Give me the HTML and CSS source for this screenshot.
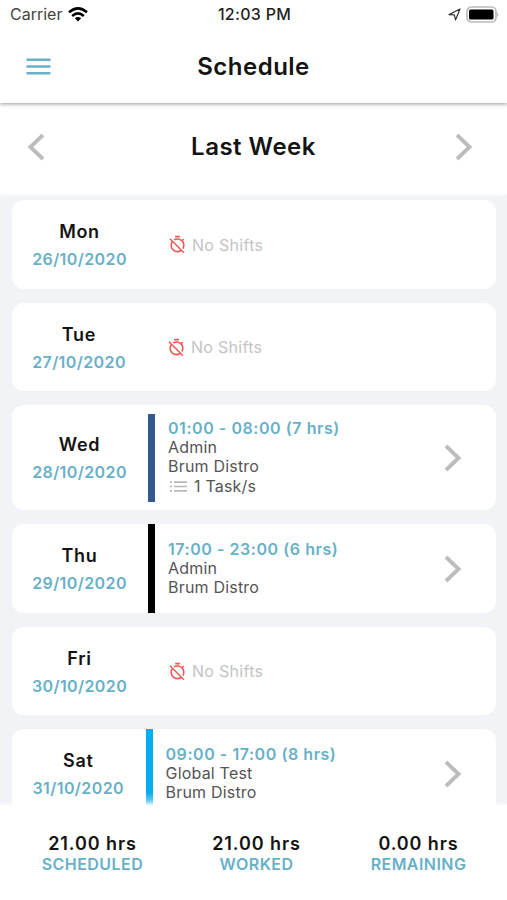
FILE: index.html
```html
<!DOCTYPE html>
<html lang="en">
<head>
<meta charset="utf-8">
<title>Schedule</title>
<link rel="stylesheet" href="styles.css">
</head>
<body>
<svg class="defs" aria-hidden="true">
  <symbol id="next" viewBox="0 0 18 28"><path d="M2 2 L14.6 14 L2 26" fill="none" stroke="currentColor" stroke-width="3.8"/></symbol>
  <symbol id="timer-off" viewBox="0 0 24 24"><path fill="currentColor" d="M19.04 4.55l-1.42 1.42C16.07 4.74 14.12 4 12 4c-1.83 0-3.53.55-4.95 1.48l1.46 1.46C9.53 6.35 10.73 6 12 6c3.87 0 7 3.13 7 7 0 1.27-.35 2.47-.94 3.49l1.45 1.45C20.45 16.53 21 14.83 21 13c0-2.12-.74-4.07-1.97-5.61l1.42-1.42-1.41-1.42zM15 1H9v2h6V1zM3.02 4L1.75 5.27 4.5 8.03C3.55 9.45 3 11.16 3 13c0 4.97 4.02 9 9 9 1.84 0 3.55-.55 4.98-1.5l2.5 2.5 1.27-1.27-7.71-7.71L3.02 4zM12 20c-3.87 0-7-3.13-7-7 0-1.28.35-2.48.95-3.52l9.56 9.56c-1.03.61-2.23.96-3.51.96z"/></symbol>
</svg>
<div class="app">
  <div class="status">
    <div class="carrier">
      <span>Carrier</span>
      <svg class="wifi" viewBox="0 0 20 15"><g fill="none" stroke="#000" stroke-width="2.6"><path d="M1 5.3 Q10 -2.5 19 5.3"/><path d="M4.2 8.9 Q10 3.9 15.8 8.9"/></g><path d="M6.8 11.2 Q10 8.8 13.2 11.2 L10 14.6 Z"/></svg>
    </div>
    <div class="clock">12:03 PM</div>
    <div class="power">
      <svg class="locate" viewBox="0 0 13 13"><path d="M1 6.6 L12 1 L7.5 12 L6.4 6.8 Z" fill="none" stroke="#333" stroke-width="1.2" stroke-linejoin="round"/></svg>
      <svg class="battery" viewBox="0 0 33 17"><rect x="1" y="1" width="29" height="15" rx="4.5" fill="#fff" stroke="#bbb" stroke-width="1.7"/><rect x="3" y="3.6" width="24.5" height="9.8" rx="1.5" fill="#000"/><path d="M31.2 6.2 Q33 8.5 31.2 10.8 Z" fill="#aaa"/></svg>
    </div>
  </div>
  <header class="header">
    <svg class="menu" viewBox="0 0 24 17"><path d="M0 1.8h24M0 8.5h24M0 15.2h24" stroke="#68b0c8" stroke-width="2.5"/></svg>
    <h1>Schedule</h1>
  </header>
  <nav class="week">
    <svg class="arrow prev"><use href="#next"/></svg>
    <h2>Last Week</h2>
    <svg class="arrow"><use href="#next"/></svg>
  </nav>
  <main class="list">
    <section class="card">
      <div class="day"><b>Mon</b><span>26/10/2020</span></div>
      <div class="none"><svg><use href="#timer-off"/></svg>No Shifts</div>
    </section>
    <section class="card">
      <div class="day narrow"><b>Tue</b><span>27/10/2020</span></div>
      <div class="none"><svg><use href="#timer-off"/></svg>No Shifts</div>
    </section>
    <section class="card tall">
      <div class="day"><b>Wed</b><span>28/10/2020</span></div>
      <div class="bar navy"></div>
      <div class="shift">
        <strong>01:00 - 08:00 (7 hrs)</strong><span>Admin</span><span>Brum Distro</span>
        <span class="task"><svg viewBox="0 0 17 11"><path d="M0 1.2h2M0 5.5h2M0 9.8h2M4 1.2h13M4 5.5h13M4 9.8h13" stroke="#b9b9b9" stroke-width="1.7"/></svg>1 Task/s</span>
      </div>
      <svg class="arrow"><use href="#next"/></svg>
    </section>
    <section class="card">
      <div class="day"><b>Thu</b><span>29/10/2020</span></div>
      <div class="bar black"></div>
      <div class="shift"><strong>17:00 - 23:00 (6 hrs)</strong><span>Admin</span><span>Brum Distro</span></div>
      <svg class="arrow"><use href="#next"/></svg>
    </section>
    <section class="card">
      <div class="day"><b>Fri</b><span>30/10/2020</span></div>
      <div class="none"><svg><use href="#timer-off"/></svg>No Shifts</div>
    </section>
    <section class="card">
      <div class="day sat"><b>Sat</b><span>31/10/2020</span></div>
      <div class="bar sky"></div>
      <div class="shift"><strong>09:00 - 17:00 (8 hrs)</strong><span>Global Test</span><span>Brum Distro</span></div>
      <svg class="arrow"><use href="#next"/></svg>
    </section>
  </main>
  <footer class="totals">
    <div><b>21.00 hrs</b><span>SCHEDULED</span></div>
    <div><b>21.00 hrs</b><span>WORKED</span></div>
    <div><b>0.00 hrs</b><span>REMAINING</span></div>
  </footer>
</div>
</body>
</html>
```

FILE: styles.css
```css
* { box-sizing: border-box; }
body { margin: 0; background: #fff; font-family: Inter, sans-serif; color: #141414; }
.defs { display: none; }
.app { height: 900px; display: flex; flex-direction: column; overflow: hidden; }
svg { display: block; flex: none; }

.status { height: 30px; flex: none; display: grid; grid-template-columns: 1fr auto 1fr; align-items: center; padding: 0 8px 2px 10px; font-size: 16px; }
.carrier { display: flex; align-items: center; gap: 6px; color: #444; }
.wifi { width: 20px; height: 15px; }
.clock { font-weight: 500; color: #222; letter-spacing: .3px; }
.power { display: flex; justify-content: flex-end; align-items: center; gap: 5px; }
.locate { width: 13px; height: 13px; }
.battery { width: 33px; height: 17px; }

.header { position: relative; z-index: 2; height: 73px; flex: none; display: grid; grid-template-columns: 80px 1fr 80px; align-items: center; background: #fff; box-shadow: 0 1px 4px rgba(0, 0, 0, .42); clip-path: inset(0 0 -8px 0); }
.menu { width: 25px; height: 17px; margin: -1px 0 0 26px; }
h1, h2 { margin: 0; font-size: 24px; line-height: 30px; font-weight: 600; text-align: center; letter-spacing: .5px; }
h2 { padding: 1px 0 0 7px; }

.week { position: relative; z-index: 1; height: 91px; flex: none; display: flex; justify-content: space-between; align-items: center; padding: 0 34px 4px 27px; background: #fff; box-shadow: 0 1px 4px #fff; }
.arrow { width: 18px; height: 28px; color: #bcbcbc; }
.prev { transform: scaleX(-1); }

.list { height: 611px; flex: none; overflow: hidden; background: #f1f3f6; padding: 6.4px 11px 0 12px; display: flex; flex-direction: column; gap: 14px; }
.card { height: 88.5px; flex: none; display: flex; align-items: center; background: #fff; border-radius: 12px; padding-right: 34px; }
.tall { height: 105px; }
.day { width: 136px; flex: none; padding: 1px 21px 0 20px; display: flex; flex-direction: column; align-items: center; }
.day b { padding-top: 1px; font-size: 18px; font-weight: 600; line-height: 27px; letter-spacing: .7px; }
.day span { font-size: 16px; font-weight: 600; line-height: 28px; letter-spacing: .4px; color: #68b0c8; }
.narrow { width: 135px; }
.sat { width: 133.5px; }
.none { display: flex; align-items: center; gap: 5px; margin-left: 20px; font-size: 16px; color: #c4c4c4; letter-spacing: .3px; }
.none svg { width: 19px; height: 19px; color: #ea5a55; }
.bar { width: 7px; height: 88.5px; flex: none; }
.navy { background: #34588f; }
.black { background: #000; }
.sky { background: linear-gradient(#05aeef 64px, #9adcf6 76px); }
.shift { flex: 1; padding-left: 13px; display: flex; flex-direction: column; font-size: 16px; line-height: 19px; color: #555; letter-spacing: .2px; }
.shift strong { font-weight: 600; color: #68b0c8; letter-spacing: .55px; }
.task { display: flex; align-items: center; gap: 7px; line-height: 21px; }
.task svg { width: 17px; height: 11px; margin-left: 2px; }

.totals { flex: 1; position: relative; z-index: 1; display: grid; grid-template-columns: 162px 166px 158px; padding: 27px 0 0 11.5px; background: #fff; box-shadow: 0 -1px 4px #fff; text-align: center; }
.totals div { display: flex; flex-direction: column; }
.totals b { padding-top: 1px; font-size: 18px; font-weight: 600; line-height: 21px; letter-spacing: .9px; }
.totals span { font-size: 16px; font-weight: 600; line-height: 20px; letter-spacing: .45px; color: #68b0c8; }
```
